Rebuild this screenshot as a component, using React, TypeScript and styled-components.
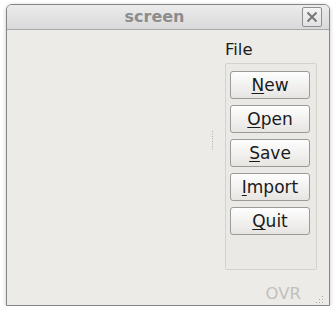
import React from "react";
import styled, { createGlobalStyle } from "styled-components";

const Global = createGlobalStyle`
  html, body { margin: 0; padding: 0; background: #ffffff; }
  body { font-family: "DejaVu Sans", "Liberation Sans", sans-serif; }
`;

const Page = styled.div`
  padding: 4px 0 0 6px;
`;

const Window = styled.div`
  width: 324px;
  height: 302px;
  box-sizing: border-box;
  border: 1px solid #858585;
  border-radius: 6px 6px 0 0;
  background: #edebe7;
  box-shadow: 0 1px 4px rgba(0, 0, 0, 0.22);
  display: flex;
  flex-direction: column;
  overflow: hidden;
`;

const TitleBar = styled.div`
  height: 25px;
  box-sizing: border-box;
  border-bottom: 1px solid #a9a9a9;
  background: linear-gradient(#ececec, #d9d9d9);
  display: flex;
  align-items: center;
  padding-right: 7px;
`;

const Title = styled.div`
  flex: 1;
  text-align: center;
  font-size: 16px;
  font-weight: bold;
  line-height: 24px;
  color: #8c8c8c;
`;

const CloseButton = styled.div`
  width: 20px;
  height: 20px;
  box-sizing: border-box;
  border: 1px solid #8e8e8e;
  border-radius: 2px;
  background: linear-gradient(#f4f4f4, #e2e2e2);
  display: flex;
  align-items: center;
  justify-content: center;
`;

const Main = styled.div`
  flex: 1;
  display: flex;
`;

const LeftPane = styled.div`
  flex: 1;
`;

const Splitter = styled.div`
  width: 5px;
  display: flex;
  align-items: center;
  justify-content: center;
  padding-bottom: 30px;
`;

const RightPane = styled.div`
  width: 114px;
  box-sizing: border-box;
  padding: 10px 12px 0 10px;
  display: flex;
  flex-direction: column;
`;

const Label = styled.div`
  font-size: 16.5px;
  line-height: 19px;
  color: #1c1c1c;
  margin-bottom: 4px;
`;

const GroupBox = styled.div`
  height: 207px;
  box-sizing: border-box;
  border: 1px solid #d5d2cd;
  border-radius: 2px;
  background: #ebe9e5;
  padding: 7px 0 0 4px;
  display: flex;
  flex-direction: column;
  gap: 6px;
`;

const Button = styled.div`
  width: 80px;
  height: 28px;
  box-sizing: border-box;
  border: 1px solid #9c9a97;
  border-radius: 3px;
  background: linear-gradient(#fefefe, #e7e5e2);
  display: flex;
  align-items: center;
  justify-content: center;
  font-size: 17px;
  color: #1a1a1a;
`;

const Mnemonic = styled.span`
  text-decoration: underline;
  text-underline-offset: 2px;
`;

const StatusBar = styled.div`
  height: 25px;
  display: flex;
  align-items: center;
  justify-content: flex-end;
  padding-right: 5px;
`;

const StatusText = styled.div`
  font-size: 16.5px;
  color: #c2c0bc;
  margin-right: 12px;
  padding-top: 2px;
`;

const Grip = styled.div`
  width: 11px;
  height: 11px;
  align-self: flex-end;
  margin-bottom: 2px;
`;

const buttons = ["New", "Open", "Save", "Import", "Quit"];

function SplitterDots() {
  const dots = [];
  for (let i = 0; i < 8; i++) {
    dots.push(<rect key={i} x={0} y={i * 2.5} width={1} height={1} fill="#b3b0ab" />);
  }
  return (
    <svg width="1" height="19" viewBox="0 0 1 19">
      {dots}
    </svg>
  );
}

function GripDots() {
  const dots = [];
  for (let r = 0; r < 4; r++) {
    for (let c = 0; c < 4; c++) {
      if (c + r >= 3) {
        dots.push(<rect key={`${r}-${c}`} x={c * 3} y={r * 3} width={1} height={1} fill="#a9a6a1" />);
      }
    }
  }
  return (
    <svg width="11" height="11" viewBox="0 0 11 11">
      {dots}
    </svg>
  );
}

export default function App() {
  return (
    <>
      <Global />
      <Page>
        <Window>
          <TitleBar>
            <Title>screen</Title>
            <CloseButton>
              <svg width="12" height="12" viewBox="0 0 12 12">
                <path d="M1.5 1.5 L10.5 10.5 M10.5 1.5 L1.5 10.5" stroke="#777" strokeWidth="2" fill="none" />
              </svg>
            </CloseButton>
          </TitleBar>
          <Main>
            <LeftPane />
            <Splitter>
              <SplitterDots />
            </Splitter>
            <RightPane>
              <Label>File</Label>
              <GroupBox>
                {buttons.map((b) => (
                  <Button key={b}>
                    <Mnemonic>{b[0]}</Mnemonic>
                    {b.slice(1)}
                  </Button>
                ))}
              </GroupBox>
            </RightPane>
          </Main>
          <StatusBar>
            <StatusText>OVR</StatusText>
            <Grip>
              <GripDots />
            </Grip>
          </StatusBar>
        </Window>
      </Page>
    </>
  );
}
